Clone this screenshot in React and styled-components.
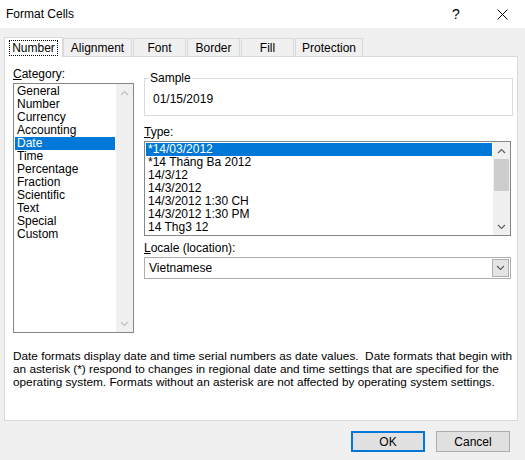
import React from "react";
import styled, { createGlobalStyle } from "styled-components";

const Global = createGlobalStyle`
  html, body { margin: 0; padding: 0; background: #f0f0f0; }
  body { font-family: "Liberation Sans", Arial, sans-serif; font-size: 12px; color: #000; }
`;

const Dialog = styled.div` width: 525px; height: 460px; display: flex; flex-direction: column; background: #f0f0f0; `;
const TitleBar = styled.div`
  height: 28px; background: #fff; display: flex; align-items: center; padding-left: 6px;
  font-size: 12px;
`;
const TitleText = styled.div` flex: 1; `;
const TitleBtn = styled.div`
  width: 46px; height: 28px; display: flex; align-items: center; justify-content: center; font-size: 14px;
`;
const Body = styled.div` padding: 8px 8px 0 4px; display: flex; flex-direction: column; `;
const Tabs = styled.div` display: flex; align-items: flex-end; height: 20px; `;
const Tab = styled.div`
  height: ${p => (p.$active ? 20 : 18)}px; width: ${p => p.$w}px; box-sizing: border-box;
  border: 1px solid #d9d9d9; border-bottom: none; margin-right: ${p => (p.$active ? 0 : 1)}px;
  background: ${p => (p.$active ? "#fff" : "#f0f0f0")};
  display: flex; align-items: center; justify-content: center; position: relative; z-index: ${p => (p.$active ? 1 : 0)};
  margin-bottom: ${p => (p.$active ? -1 : 0)}px;
  span { ${p => p.$active && "outline: 1px dotted #000; padding: 0 2px;"} }
`;
const Panel = styled.div`
  width: 514px; height: 365px; box-sizing: border-box; background: #fff; border: 1px solid #d9d9d9;
  padding: 10px 0 0 8px; display: flex; flex-direction: column;
`;
const Columns = styled.div` display: flex; gap: 10px; `;
const Col = styled.div` display: flex; flex-direction: column; `;
const Label = styled.div` height: 14px; line-height: 14px; margin-bottom: 2px; u { text-decoration: underline; } `;
const ListBox = styled.div`
  width: ${p => p.$w}px; height: ${p => p.$h}px; box-sizing: border-box; border: 1px solid #828790;
  display: flex; background: #fff;
`;
const Items = styled.div` flex: 1; padding: 1px 1px 0 1px; overflow: hidden; `;
const Item = styled.div`
  height: 13px; line-height: 13px; padding-left: 2px; white-space: nowrap;
  background: ${p => (p.$sel ? "#0078d7" : "transparent")}; color: ${p => (p.$sel ? "#fff" : "#000")};
`;
const Scroll = styled.div` width: 17px; background: #f0f0f0; display: flex; flex-direction: column; align-items: center; `;
const Arrow = styled.div` height: 17px; width: 17px; display: flex; align-items: center; justify-content: center; `;
const Thumb = styled.div` width: 15px; height: ${p => p.$h}px; background: #cdcdcd; `;
const Spacer = styled.div` flex: 1; `;
const Fieldset = styled.fieldset`
  margin: 0 0 9px 0; padding: 6px 0 8px 8px; width: 369px; box-sizing: border-box; border: 1px solid #dcdcdc;
  legend { padding: 0 1px; margin-left: -4px; font-size: 12px; }
`;
const SampleValue = styled.div` height: 16px; line-height: 16px; `;
const Select = styled.div`
  width: 367px; height: 22px; box-sizing: border-box; border: 1px solid #adadad; display: flex; align-items: center;
  padding-left: 4px;
`;
const SelectBtn = styled.div`
  margin-left: auto; width: 17px; height: 18px; margin-right: 1px; background: #e5e5e5; border: 1px solid #adadad;
  box-sizing: border-box; display: flex; align-items: center; justify-content: center;
`;
const Desc = styled.div` margin-top: 17px; line-height: 13px; white-space: nowrap; font-size: 11.8px; `;
const Footer = styled.div` display: flex; justify-content: flex-end; gap: 11px; padding: 10px 7px 0 0; `;
const Button = styled.button`
  width: 74px; height: 21px; font: inherit; background: #e1e1e1; color: #000; padding: 0;
  border: ${p => (p.$def ? "2px solid #0078d7" : "1px solid #adadad")};
`;

const Chev = ({ up, color = "#606060" }) => (
  <svg width="9" height="6" viewBox="0 0 9 6">
    <path d={up ? "M1 5 L4.5 1.5 L8 5" : "M1 1 L4.5 4.5 L8 1"} fill="none" stroke={color} strokeWidth="1.2" />
  </svg>
);

const categories = ["General", "Number", "Currency", "Accounting", "Date", "Time", "Percentage", "Fraction", "Scientific", "Text", "Special", "Custom"];
const types = ["*14/03/2012", "*14 Tháng Ba 2012", "14/3/12", "14/3/2012", "14/3/2012 1:30 CH", "14/3/2012 1:30 PM", "14 Thg3 12"];
const tabs = [["Number", 59], ["Alignment", 69], ["Font", 53], ["Border", 53], ["Fill", 53], ["Protection", 68]];

export default function App() {
  return (
    <Dialog>
      <Global />
      <TitleBar>
        <TitleText>Format Cells</TitleText>
        <TitleBtn>?</TitleBtn>
        <TitleBtn>
          <svg width="11" height="11" viewBox="0 0 11 11"><path d="M0.5 0.5 L10.5 10.5 M10.5 0.5 L0.5 10.5" stroke="#000" strokeWidth="1" /></svg>
        </TitleBtn>
      </TitleBar>
      <Body>
        <Tabs>
          {tabs.map(([t, w], i) => (
            <Tab key={t} $w={w} $active={i === 0}><span>{t}</span></Tab>
          ))}
        </Tabs>
        <Panel>
          <Columns>
            <Col>
              <Label><u>C</u>ategory:</Label>
              <ListBox $w={121} $h={250}>
                <Items>
                  {categories.map(c => <Item key={c} $sel={c === "Date"}>{c}</Item>)}
                </Items>
                <Scroll>
                  <Arrow><Chev up color="#c0c0c0" /></Arrow>
                  <Spacer />
                  <Arrow><Chev color="#c0c0c0" /></Arrow>
                </Scroll>
              </ListBox>
            </Col>
            <Col style={{ paddingTop: 4 }}>
              <Fieldset>
                <legend>Sample</legend>
                <SampleValue>01/15/2019</SampleValue>
              </Fieldset>
              <Label><u>T</u>ype:</Label>
              <ListBox $w={367} $h={95}>
                <Items>
                  {types.map((t, i) => <Item key={t} $sel={i === 0}>{t}</Item>)}
                </Items>
                <Scroll>
                  <Arrow><Chev up /></Arrow>
                  <Thumb $h={32} />
                  <Spacer />
                  <Arrow><Chev /></Arrow>
                </Scroll>
              </ListBox>
              <Label style={{ marginTop: 5 }}><u>L</u>ocale (location):</Label>
              <Select>
                Vietnamese
                <SelectBtn><Chev /></SelectBtn>
              </Select>
            </Col>
          </Columns>
          <Desc>
            Date formats display date and time serial numbers as date values.&nbsp; Date formats that begin with<br />
            an asterisk (*) respond to changes in regional date and time settings that are specified for the<br />
            operating system. Formats without an asterisk are not affected by operating system settings.
          </Desc>
        </Panel>
        <Footer>
          <Button $def>OK</Button>
          <Button>Cancel</Button>
        </Footer>
      </Body>
    </Dialog>
  );
}
